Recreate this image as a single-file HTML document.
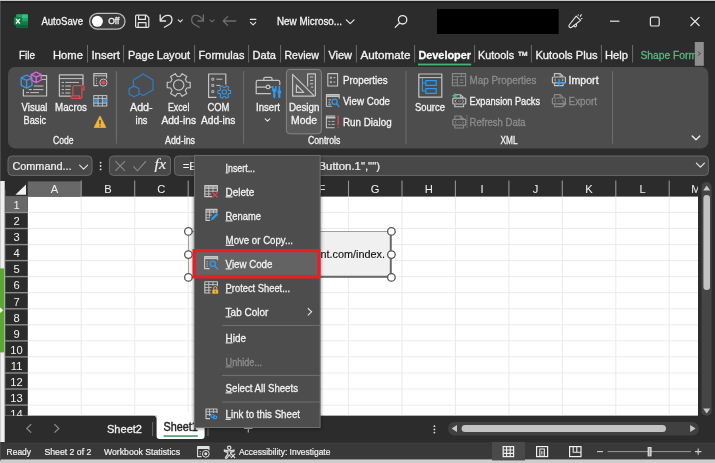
<!DOCTYPE html>
<html lang="en"><head><meta charset="utf-8"><title>Excel - View Code</title>
<style>
html,body{margin:0;padding:0;background:#2c2c2c;overflow:hidden}
svg{display:block;font-family:"Liberation Sans",sans-serif;will-change:transform}
text{white-space:pre}
</style></head>
<body>
<svg width="715" height="463" viewBox="0 0 715 463">
<rect x="0" y="0" width="715" height="463" fill="#2c2c2c" />
<g>
<rect x="16.4" y="14.4" width="11.4" height="13.5" rx="1.2" fill="#21a366"/>
<rect x="16.4" y="14.4" width="5.8" height="3.6" fill="#21a366"/>
<rect x="22.2" y="14.4" width="5.6" height="3.6" fill="#33c481"/>
<rect x="16.4" y="18" width="5.8" height="3.3" fill="#107c41"/>
<rect x="22.2" y="18" width="5.6" height="3.3" fill="#21a366"/>
<rect x="16.4" y="21.3" width="5.8" height="3.3" fill="#185c37"/>
<rect x="22.2" y="21.3" width="5.6" height="3.3" fill="#107c41"/>
<rect x="16.4" y="24.6" width="11.4" height="3.3" fill="#185c37"/>
<rect x="13.9" y="17" width="8" height="8.2" rx="1" fill="#107c41"/>
<path d="M16 18.800 L19.800 23.500 M19.800 18.800 L16 23.500" stroke="#fff" stroke-width="1.300" fill="none"/>
</g>
<text x="41.4" y="25.4" font-size="10.2" fill="#f3f3f3" stroke="#f3f3f3" stroke-width="0.3" textLength="41.6" lengthAdjust="spacingAndGlyphs" >AutoSave</text>
<rect x="89.6" y="13.4" width="35.4" height="15.8" fill="#3a3a3a" rx="7.9" stroke="#bdbdbd" stroke-width="1.3" />
<circle cx="97.4" cy="21.3" r="5.5" fill="#fff"/>
<text x="108.2" y="24.3" font-size="8.6" fill="#f3f3f3" stroke="#f3f3f3" stroke-width="0.3" textLength="11.2" lengthAdjust="spacingAndGlyphs" >Off</text>
<g stroke="#e6e6e6" stroke-width="1.2" fill="none" stroke-linejoin="round"><path d="M136.800 15.200 h9.400 l2.600 2.400 v8.600 q0 1.200 -1.200 1.200 h-10.800 q-1.200 0 -1.200 -1.200 v-9.800 q0 -1.200 1.200 -1.200 z"/><path d="M138.600 15.400 v4 h6.800 v-4"/><path d="M138.200 27.200 v-4.600 h7.800 v4.600"/></g>
<g stroke="#e6e6e6" stroke-width="1.3" fill="none" stroke-linecap="round" stroke-linejoin="round"><path d="M160.200 14.800 V21 H165.600"/><path d="M160.600 20.600 C162 17.600 165 15.400 168 15.400 C170.600 15.400 172 17.600 172 20 C172 22 171 23.200 169.600 24.300 L164.400 27.200"/><path d="M178.200 19.800 l2.100 2.100 l2.100 -2.100" stroke-width="1.100"/></g>
<g stroke="#6e6e6e" stroke-width="1.3" fill="none" stroke-linecap="round" stroke-linejoin="round"><path d="M203.400 14.800 V21 H198"/><path d="M203 20.600 C201.600 17.600 198.600 15.400 195.600 15.400 C193 15.400 191.600 17.600 191.600 20 C191.600 22 192.600 23.200 194 24.300 L199.200 27.200"/><path d="M210 19.800 l2.100 2.100 l2.100 -2.100" stroke-width="1.100"/><path d="M235.800 21 h-12.600 m4.400 -4.400 l-4.400 4.400 l4.400 4.400"/></g>
<g stroke="#e6e6e6" stroke-width="1.1" fill="none" stroke-linecap="round" stroke-linejoin="round"><path d="M250.300 19.400 h5.600"/><path d="M250.500 22.300 l2.600 2.500 l2.600 -2.500"/></g>
<text x="277" y="25.4" font-size="10.2" fill="#f3f3f3" stroke="#f3f3f3" stroke-width="0.3" textLength="65" lengthAdjust="spacingAndGlyphs" >New Microso...</text>
<path d="M346.300 19.800 l3.900 3.900 l3.900 -3.900" stroke="#e6e6e6" stroke-width="1.2" fill="none" stroke-linecap="round" stroke-linejoin="round"/>
<g stroke="#e6e6e6" stroke-width="1.3" fill="none" stroke-linecap="round"><circle cx="402.6" cy="19.8" r="4.2"/><path d="M399.6 23 L395.2 27.4"/></g>
<rect x="437" y="9" width="121.6" height="25" fill="#000" />
<g stroke="#e6e6e6" stroke-width="1.1" fill="none" stroke-linecap="round" stroke-linejoin="round"><path d="M569.200 25 L576.200 16.200 L580.600 20.400 L571.600 27.300 Q569.800 28.300 569 26.600 Q568.700 25.700 569.200 25 Z"/><path d="M573.800 25.800 q0.800 1.600 2.200 0.800 q1 -0.800 0.400 -2.400"/><path d="M580.300 16.400 l1 -1.700 M578.200 15.300 l0.100 -0.500 M581.300 18.700 l0.700 -0.200"/></g>
<line x1="610" y1="21.2" x2="619.4" y2="21.2" stroke="#e6e6e6" stroke-width="1.2" />
<rect x="650.4" y="17.2" width="8.8" height="8.8" fill="none" rx="1.6" stroke="#e6e6e6" stroke-width="1.2" />
<path d="M690.900 17.300 l8.200 8.200 M699.100 17.300 l-8.200 8.200" stroke="#e6e6e6" stroke-width="1.200" fill="none" stroke-linecap="round"/>
<text x="19" y="58.7" font-size="10.7" fill="#f3f3f3" stroke="#f3f3f3" stroke-width="0.3" textLength="16" lengthAdjust="spacingAndGlyphs" >File</text>
<text x="53" y="58.7" font-size="10.7" fill="#f3f3f3" stroke="#f3f3f3" stroke-width="0.3" textLength="30" lengthAdjust="spacingAndGlyphs" >Home</text>
<text x="91.4" y="58.7" font-size="10.7" fill="#f3f3f3" stroke="#f3f3f3" stroke-width="0.3" textLength="28.6" lengthAdjust="spacingAndGlyphs" >Insert</text>
<text x="128" y="58.7" font-size="10.7" fill="#f3f3f3" stroke="#f3f3f3" stroke-width="0.3" textLength="62" lengthAdjust="spacingAndGlyphs" >Page Layout</text>
<text x="198.6" y="58.7" font-size="10.7" fill="#f3f3f3" stroke="#f3f3f3" stroke-width="0.3" textLength="45.8" lengthAdjust="spacingAndGlyphs" >Formulas</text>
<text x="252.6" y="58.7" font-size="10.7" fill="#f3f3f3" stroke="#f3f3f3" stroke-width="0.3" textLength="23.4" lengthAdjust="spacingAndGlyphs" >Data</text>
<text x="284.4" y="58.7" font-size="10.7" fill="#f3f3f3" stroke="#f3f3f3" stroke-width="0.3" textLength="34.6" lengthAdjust="spacingAndGlyphs" >Review</text>
<text x="328.4" y="58.7" font-size="10.7" fill="#f3f3f3" stroke="#f3f3f3" stroke-width="0.3" textLength="23.6" lengthAdjust="spacingAndGlyphs" >View</text>
<text x="360.4" y="58.7" font-size="10.7" fill="#f3f3f3" stroke="#f3f3f3" stroke-width="0.3" textLength="50.0" lengthAdjust="spacingAndGlyphs" >Automate</text>
<text x="418.4" y="58.7" font-size="10.7" fill="#fff" stroke="#fff" stroke-width="0.3" textLength="52.6" lengthAdjust="spacingAndGlyphs" font-weight="bold" >Developer</text>
<rect x="418" y="63.6" width="53.2" height="1.8" fill="#41b675" />
<text x="478" y="58.7" font-size="10.7" fill="#f3f3f3" stroke="#f3f3f3" stroke-width="0.3" textLength="50" lengthAdjust="spacingAndGlyphs" >Kutools ™</text>
<text x="535.4" y="58.7" font-size="10.7" fill="#f3f3f3" stroke="#f3f3f3" stroke-width="0.3" textLength="62.2" lengthAdjust="spacingAndGlyphs" >Kutools Plus</text>
<text x="605" y="58.7" font-size="10.7" fill="#f3f3f3" stroke="#f3f3f3" stroke-width="0.3" textLength="23" lengthAdjust="spacingAndGlyphs" >Help</text>
<text x="640.4" y="58.7" font-size="10.7" fill="#55bb80" stroke="#55bb80" stroke-width="0.3" textLength="65.2" lengthAdjust="spacingAndGlyphs" >Shape Format</text>
<line x1="87.5" y1="45" x2="87.5" y2="62.5" stroke="#6e6e6e" stroke-width="1" />
<line x1="123.6" y1="45" x2="123.6" y2="62.5" stroke="#6e6e6e" stroke-width="1" />
<line x1="194.6" y1="45" x2="194.6" y2="62.5" stroke="#6e6e6e" stroke-width="1" />
<line x1="248.6" y1="45" x2="248.6" y2="62.5" stroke="#6e6e6e" stroke-width="1" />
<line x1="280.6" y1="45" x2="280.6" y2="62.5" stroke="#6e6e6e" stroke-width="1" />
<line x1="324.4" y1="45" x2="324.4" y2="62.5" stroke="#6e6e6e" stroke-width="1" />
<line x1="356.4" y1="45" x2="356.4" y2="62.5" stroke="#6e6e6e" stroke-width="1" />
<line x1="414.6" y1="45" x2="414.6" y2="62.5" stroke="#6e6e6e" stroke-width="1" />
<line x1="474.6" y1="45" x2="474.6" y2="62.5" stroke="#6e6e6e" stroke-width="1" />
<line x1="531.4" y1="45" x2="531.4" y2="62.5" stroke="#6e6e6e" stroke-width="1" />
<line x1="601.4" y1="45" x2="601.4" y2="62.5" stroke="#6e6e6e" stroke-width="1" />
<line x1="632.6" y1="45" x2="632.6" y2="62.5" stroke="#6e6e6e" stroke-width="1" />
<rect x="694.8" y="40" width="21" height="27" fill="#2c2c2c" />
<rect x="694.8" y="42" width="9" height="23.8" fill="#8e8e8e" />
<path d="M698.2 51.6 l2 2 l-2 2" stroke="#333" stroke-width="0.9" fill="none"/>
<rect x="0" y="0" width="715" height="1.2" fill="#c6c6c6" />
<rect x="0" y="1.2" width="715" height="1.4" fill="#1b1b1b" />
<rect x="8" y="67" width="700.4" height="81.4" fill="#4d4d4d" rx="7" />
<line x1="116.4" y1="71" x2="116.4" y2="143.6" stroke="#6f6f6f" stroke-width="1" />
<line x1="243.6" y1="71" x2="243.6" y2="143.6" stroke="#6f6f6f" stroke-width="1" />
<line x1="406" y1="71" x2="406" y2="143.6" stroke="#6f6f6f" stroke-width="1" />
<line x1="612.6" y1="71" x2="612.6" y2="143.6" stroke="#6f6f6f" stroke-width="1" />
<g fill="none" stroke-linejoin="round" stroke-linecap="round"><path d="M41 75.6 h5.6 v20.4 h-23.2 v-6.4" stroke="#c4c4c4" stroke-width="1.2"/><path d="M42 79.4 h4.4" stroke="#c4c4c4" stroke-width="1"/><path d="M34.4 86 h8.6 M29 89.6 h2.4 M33.6 89.6 h9.4 M26.6 92.6 h2 M30.6 92.6 h8" stroke="#c4c4c4" stroke-width="1"/><path d="M21.200 77.800 l5.400 -2.600 l5.400 2.600 v7.600 l-5.400 2.800 l-5.400 -2.800 z M26.600 80.400 v7.600 M21.200 77.800 l5.400 2.600 l5.400 -2.600" stroke="#3a96dd" stroke-width="1.400"/><path d="M31.200 74.600 l5 -2.500 l5 2.500 v5.400 l-5 2.600 l-5 -2.600 z M36.200 77 v5.400 M31.200 74.600 l5 2.400 l5 -2.400" stroke="#d067d6" stroke-width="1.400"/></g>
<text x="21.6" y="111" font-size="10" fill="#f3f3f3" stroke="#f3f3f3" stroke-width="0.3" textLength="25.8" lengthAdjust="spacingAndGlyphs" >Visual</text>
<text x="23.6" y="124" font-size="10" fill="#f3f3f3" stroke="#f3f3f3" stroke-width="0.3" textLength="22.4" lengthAdjust="spacingAndGlyphs" >Basic</text>
<g fill="none" stroke-linejoin="round" stroke-linecap="round"><path d="M70.4 96.2 h-11 v-21.4 h23.6 v10" stroke="#c4c4c4" stroke-width="1.2"/><path d="M59.4 78.6 h23.6" stroke="#c4c4c4" stroke-width="1"/><path d="M62 82.4 h1.6 M65.6 82.4 h13 M62 86 h1.6 M65.6 86 h5 M62 89.6 h1.6 M65.6 89.6 h4.4 M62 93 h1.6 M65.6 93 h4.4" stroke="#c4c4c4" stroke-width="1"/><path d="M72.800 95.800 V87.400 Q72.800 85.600 74.600 85.600 H82.200 Q84.200 85.600 84.200 87.600 V89.600 H81.900 M81.900 87.400 V96.400 Q81.900 98.300 80 98.300 H72.200 Q70.900 98.300 70.900 97.100 Q70.900 95.900 72.200 95.900 H79.400 Q80 97 79.700 98.200" stroke="#e4484d" stroke-width="1.200"/></g>
<text x="55" y="111" font-size="10" fill="#f3f3f3" stroke="#f3f3f3" stroke-width="0.3" textLength="32" lengthAdjust="spacingAndGlyphs" >Macros</text>
<g fill="none" stroke-linejoin="round"><path d="M98.4 85.6 h-4.6 v-12 h12.800 v5" stroke="#c4c4c4" stroke-width="1.1"/><path d="M93.8 75.800 h12.800" stroke="#c4c4c4" stroke-width="1"/><path d="M96 78.600 h1 M96 81 h1 M96 83.400 h1" stroke="#c4c4c4" stroke-width="1"/><circle cx="103.4" cy="82.6" r="3.6" stroke="#c4c4c4" stroke-width="1"/><circle cx="103.4" cy="82.6" r="2.1" fill="#e4484d"/></g>
<g><rect x="93.8" y="95.6" width="13" height="10.4" fill="none" stroke="#c4c4c4" stroke-width="1"/><rect x="94.300" y="98.6" width="3.6" height="4.4" fill="#2f8ee0"/><rect x="102.6" y="98.6" width="3.8" height="4.4" fill="#2f8ee0"/><path d="M93.800 98.400 h13 M93.800 103.200 h13 M98.200 95.600 v10.400 M102.400 95.600 v10.400" stroke="#c4c4c4" stroke-width="0.9" fill="none"/><path d="M98.4 100.800 h4" stroke="#2f8ee0" stroke-width="1" stroke-dasharray="1 1"/></g>
<path d="M100 116 l5.800 11.400 h-11.600 z" fill="#f4b43c" stroke="#f4b43c" stroke-width="0.8" stroke-linejoin="round"/><path d="M100 120 v4.200 M100 125.400 v1" stroke="#3a3a3a" stroke-width="1.2"/>
<text x="53" y="144.2" font-size="10" fill="#f3f3f3" stroke="#f3f3f3" stroke-width="0.3" textLength="20.4" lengthAdjust="spacingAndGlyphs" >Code</text>
<g fill="none" stroke="#2d7fd0" stroke-width="1.2" stroke-linejoin="round"><path d="M133.4 86 V80 L143.2 74.1 L153 80 V90 L143.2 95.6 L139.6 93.6"/><path d="M134 86.1 L139 88.6 V94.2 L134 96.8 L129.2 94.2 V88.6 Z"/></g>
<text x="130" y="111" font-size="10" fill="#f3f3f3" stroke="#f3f3f3" stroke-width="0.3" textLength="22.6" lengthAdjust="spacingAndGlyphs" >Add-</text>
<text x="135.6" y="124" font-size="10" fill="#f3f3f3" stroke="#f3f3f3" stroke-width="0.3" textLength="11.8" lengthAdjust="spacingAndGlyphs" >ins</text>
<path d="M186.76 82.00 L190.19 82.31 L190.19 87.69 L186.76 88.00 L185.33 90.48 L186.78 93.60 L182.11 96.30 L180.13 93.48 L177.27 93.48 L175.29 96.30 L170.62 93.60 L172.07 90.48 L170.64 88.00 L167.21 87.69 L167.21 82.31 L170.64 82.00 L172.07 79.52 L170.62 76.40 L175.29 73.70 L177.27 76.52 L180.13 76.52 L182.11 73.70 L186.78 76.40 L185.33 79.52 Z" fill="none" stroke="#c4c4c4" stroke-width="1.2" stroke-linejoin="round"/>
<circle cx="178.7" cy="85" r="5.2" fill="none" stroke="#c4c4c4" stroke-width="1.2"/>
<text x="168" y="111" font-size="10" fill="#f3f3f3" stroke="#f3f3f3" stroke-width="0.3" textLength="21.4" lengthAdjust="spacingAndGlyphs" >Excel</text>
<text x="161.4" y="124" font-size="10" fill="#f3f3f3" stroke="#f3f3f3" stroke-width="0.3" textLength="34.6" lengthAdjust="spacingAndGlyphs" >Add-ins</text>
<g fill="none" stroke="#c4c4c4" stroke-linejoin="round"><path d="M216.4 97.4 h-7.800 v-23.400 h17.200 v10.600" stroke-width="1.2"/><path d="M211.800 78.200 h2 v2 h-2 z M211.800 84.400 h2 v2 h-2 z M211.800 90.600 h2 v2 h-2 z" stroke-width="0.9"/><path d="M216.400 79.200 h6 M216.400 85.400 h4" stroke-width="1"/></g>
<path d="M228.61 90.40 L230.63 90.52 L230.63 93.48 L228.61 93.60 L227.84 94.93 L228.75 96.74 L226.18 98.22 L225.07 96.54 L223.53 96.54 L222.42 98.22 L219.85 96.74 L220.76 94.93 L219.99 93.60 L217.97 93.48 L217.97 90.52 L219.99 90.40 L220.76 89.07 L219.85 87.26 L222.42 85.78 L223.53 87.46 L225.07 87.46 L226.18 85.78 L228.75 87.26 L227.84 89.07 Z" fill="none" stroke="#3a96dd" stroke-width="1.1" stroke-linejoin="round"/>
<circle cx="224.3" cy="92" r="2.2" fill="none" stroke="#3a96dd" stroke-width="1.1"/>
<text x="207.4" y="111" font-size="10" fill="#f3f3f3" stroke="#f3f3f3" stroke-width="0.3" textLength="22" lengthAdjust="spacingAndGlyphs" >COM</text>
<text x="201" y="124" font-size="10" fill="#f3f3f3" stroke="#f3f3f3" stroke-width="0.3" textLength="34.4" lengthAdjust="spacingAndGlyphs" >Add-ins</text>
<text x="165" y="144.2" font-size="10" fill="#f3f3f3" stroke="#f3f3f3" stroke-width="0.3" textLength="30" lengthAdjust="spacingAndGlyphs" >Add-ins</text>
<g fill="none" stroke="#c4c4c4" stroke-width="1.2" stroke-linejoin="round" stroke-linecap="round"><path d="M270.400 93.600 h-14.200 v-11.600 q0 -1.600 1.600 -1.600 h20.400 q1.600 0 1.600 1.600 v2.600"/><path d="M263.800 80.200 v-1.600 q0 -1.200 1.200 -1.200 h5.800 q1.200 0 1.200 1.200 v1.600"/><path d="M256.400 87.200 h9.600 M270 87.200 h1"/><circle cx="268" cy="86.900" r="1.800"/></g>
<g fill="#2f9bf0" stroke="none"><path d="M272.100 86 h1.500 v2.800 h1.500 v-2.800 h1.500 v4.200 q0 1.100 -1.200 1.500 v5.400 q0 1.100 -1.100 1.100 t-1.100 -1.100 v-5.400 q-1.100 -0.400 -1.100 -1.500 z"/><path d="M278.400 86 h1.800 v4.400 h0.900 v2.800 h-0.700 v3.900 q0 1.100 -1.100 1.100 t-1.100 -1.100 v-3.900 h-0.700 v-2.800 h0.900 z"/></g>
<text x="256" y="111" font-size="10" fill="#f3f3f3" stroke="#f3f3f3" stroke-width="0.3" textLength="24" lengthAdjust="spacingAndGlyphs" >Insert</text>
<path d="M265.200 118.800 l2.300 2.300 l2.300 -2.300" stroke="#e6e6e6" stroke-width="1.1" fill="none" stroke-linecap="round" stroke-linejoin="round"/>
<rect x="286.4" y="69.4" width="35" height="64.4" fill="#5a5a5a" rx="3.5" stroke="#868686" stroke-width="1" />
<g fill="none" stroke="#c4c4c4" stroke-width="1.2" stroke-linejoin="round"><path d="M292.600 74.400 v21.800 h21.800 z"/><path d="M296.400 85 v7.400 h7.400 z"/><path d="M307.600 86.400 v-12.600 h7.800 v22.400" /><path d="M310 77 h3.200 M310 80.400 h3.200 M310 83.800 h3.200 M311 87.200 h2.200 M313 90.600 h0.800" stroke-width="1"/></g>
<text x="289" y="111" font-size="10" fill="#f3f3f3" stroke="#f3f3f3" stroke-width="0.3" textLength="30.4" lengthAdjust="spacingAndGlyphs" >Design</text>
<text x="291" y="124" font-size="10" fill="#f3f3f3" stroke="#f3f3f3" stroke-width="0.3" textLength="26" lengthAdjust="spacingAndGlyphs" >Mode</text>
<g fill="none" stroke="#c4c4c4" stroke-linejoin="round"><rect x="327.800" y="73.600" width="9.800" height="12.400" stroke-width="1.1"/><path d="M330.200 77 h1.400 v1.400 h-1.400 z M330.200 81.400 h1.400 v1.400 h-1.400 z" stroke-width="0.8"/><path d="M333.400 77.700 h2 M333.400 82.100 h2" stroke-width="1"/></g>
<text x="343" y="83.6" font-size="10" fill="#f3f3f3" stroke="#f3f3f3" stroke-width="0.3" textLength="44.6" lengthAdjust="spacingAndGlyphs" >Properties</text>
<g fill="none" stroke="#c4c4c4" stroke-linejoin="round"><path d="M331.800 106.200 h-5.400 v-11.600 h12.800 v4.200" stroke-width="1.100"/><path d="M326.400 96.200 h12.800" stroke-width="1.800"/><path d="M328.400 99.800 h2.600 M328.400 102.200 h1.800 M328.400 104.200 h2.600" stroke-width="0.900"/></g><circle cx="334.600" cy="101.800" r="2.600" fill="none" stroke="#2f9bf0" stroke-width="1.200"/><path d="M336.500 103.800 l2.500 2.700" stroke="#2f9bf0" stroke-width="1.300" stroke-linecap="round"/>
<text x="343" y="105" font-size="10" fill="#f3f3f3" stroke="#f3f3f3" stroke-width="0.3" textLength="47" lengthAdjust="spacingAndGlyphs" >View Code</text>
<g fill="none" stroke="#c4c4c4" stroke-linejoin="round"><path d="M334.600 127.800 h-8.200 v-11.800 h8.800" stroke-width="1.100"/><path d="M326.400 117.600 h9" stroke-width="1.800"/><path d="M328.400 121.400 h2 M331.600 121.400 h3 M328.400 124.400 h2 M331.600 124.400 h3" stroke-width="0.900"/></g><path d="M338.200 115.600 v9.400 M338.200 126.600 v1.600" stroke="#e4484d" stroke-width="1.300"/>
<text x="343" y="126.4" font-size="10" fill="#f3f3f3" stroke="#f3f3f3" stroke-width="0.3" textLength="48.6" lengthAdjust="spacingAndGlyphs" >Run Dialog</text>
<text x="308" y="144.2" font-size="10" fill="#f3f3f3" stroke="#f3f3f3" stroke-width="0.3" textLength="32.4" lengthAdjust="spacingAndGlyphs" >Controls</text>
<g fill="none" stroke-linejoin="round"><rect x="418.800" y="74" width="23" height="23.200" stroke="#c4c4c4" stroke-width="1.200"/><path d="M418.800 77.600 h23" stroke="#c4c4c4" stroke-width="1"/><rect x="425.800" y="80.600" width="10.400" height="4.800" stroke="#2f9bf0" stroke-width="1.100"/><rect x="425.800" y="88.600" width="10.400" height="4.800" stroke="#2f9bf0" stroke-width="1.100"/><path d="M422.400 78 v13 h3.400 M422.400 83 h3.400" stroke="#2f9bf0" stroke-width="1.100"/></g>
<text x="415" y="111" font-size="10" fill="#f3f3f3" stroke="#f3f3f3" stroke-width="0.3" textLength="30" lengthAdjust="spacingAndGlyphs" >Source</text>
<g fill="none" stroke="#8a8a8a" stroke-linejoin="round"><rect x="452.400" y="73.600" width="13.200" height="12.200" stroke-width="1.100"/><path d="M452.400 76.600 h13.200 M452.400 79.800 h5 M452.400 82.800 h5 M457.400 76.600 v9.200 M461.400 73.600 v3" stroke-width="0.900"/><path d="M459.800 80 h3.600 M459.800 82.600 h3.600" stroke-width="0.900"/></g>
<text x="469.6" y="83.6" font-size="10" fill="#8c8c8c" stroke="#8c8c8c" stroke-width="0.3" textLength="66.8" lengthAdjust="spacingAndGlyphs" >Map Properties</text>
<g fill="none" stroke="#c4c4c4" stroke-linejoin="round" transform="translate(452.4 94.4)"><path d="M2.400 3.400 v-3 h5.800 l2.600 2.400 v0.600" stroke-width="1.100"/><path d="M8 0.600 v2.400 h2.600" stroke-width="0.9"/><rect x="0.400" y="3.800" width="13" height="5.800" rx="0.900" stroke-width="1.200"/><path d="M4 5.300 l-1.500 1.400 l1.500 1.400 M9.800 5.300 l1.500 1.400 l-1.500 1.400 M6 6.700 h0.800 M7.400 6.700 h0.800" stroke-width="0.9"/><path d="M2.400 10 v2.400 h8.800 v-2.400" stroke-width="1.100"/></g>
<path d="M454.600 93.600 v4.400 M452.400 95.800 h4.400" stroke="#35c46a" stroke-width="1.500"/>
<text x="469.6" y="105" font-size="10" fill="#f3f3f3" stroke="#f3f3f3" stroke-width="0.3" textLength="70.4" lengthAdjust="spacingAndGlyphs" >Expansion Packs</text>
<g fill="none" stroke="#8a8a8a" stroke-linejoin="round" transform="translate(452.4 115.6)"><path d="M2.400 3.400 v-3 h5.800 l2.600 2.400 v0.600" stroke-width="1.100"/><path d="M8 0.600 v2.400 h2.600" stroke-width="0.9"/><rect x="0.400" y="3.800" width="13" height="5.800" rx="0.900" stroke-width="1.200"/><path d="M4 5.300 l-1.500 1.400 l1.500 1.400 M9.800 5.300 l1.500 1.400 l-1.500 1.400 M6 6.700 h0.800 M7.400 6.700 h0.800" stroke-width="0.9"/><path d="M2.400 10 v2.400 h8.800 v-2.400" stroke-width="1.100"/></g>
<path d="M467 115.400 v13" stroke="#8a8a8a" stroke-width="1" stroke-dasharray="1.2 1"/>
<text x="469.6" y="126.4" font-size="10" fill="#8c8c8c" stroke="#8c8c8c" stroke-width="0.3" textLength="56" lengthAdjust="spacingAndGlyphs" >Refresh Data</text>
<text x="500.6" y="144.2" font-size="10" fill="#f3f3f3" stroke="#f3f3f3" stroke-width="0.3" textLength="17" lengthAdjust="spacingAndGlyphs" >XML</text>
<g fill="none" stroke="#c4c4c4" stroke-linejoin="round" transform="translate(552 73.2)"><path d="M2.400 3.400 v-3 h5.800 l2.600 2.400 v0.600" stroke-width="1.100"/><path d="M8 0.600 v2.400 h2.600" stroke-width="0.9"/><rect x="0.400" y="3.800" width="13" height="5.800" rx="0.900" stroke-width="1.200"/><path d="M4 5.300 l-1.500 1.400 l1.500 1.400 M9.800 5.300 l1.500 1.400 l-1.500 1.400 M6 6.700 h0.800 M7.400 6.700 h0.800" stroke-width="0.9"/><path d="M2.400 10 v2.400 h8.800 v-2.400" stroke-width="1.100"/></g>
<path d="M565.600 83 h-8.200 m2.600 -2.600 l-2.600 2.600 l2.600 2.600" stroke="#2f9bf0" stroke-width="1.300" fill="none"/>
<text x="568.6" y="83.6" font-size="10" fill="#f3f3f3" stroke="#f3f3f3" stroke-width="0.3" textLength="30" lengthAdjust="spacingAndGlyphs" >Import</text>
<g fill="none" stroke="#8a8a8a" stroke-linejoin="round" transform="translate(552 94.2)"><path d="M2.400 3.400 v-3 h5.800 l2.600 2.400 v0.600" stroke-width="1.100"/><path d="M8 0.600 v2.400 h2.600" stroke-width="0.9"/><rect x="0.400" y="3.800" width="13" height="5.800" rx="0.900" stroke-width="1.200"/><path d="M4 5.300 l-1.500 1.400 l1.500 1.400 M9.800 5.300 l1.500 1.400 l-1.500 1.400 M6 6.700 h0.800 M7.400 6.700 h0.800" stroke-width="0.9"/><path d="M2.400 10 v2.400 h8.800 v-2.400" stroke-width="1.100"/></g>
<path d="M559.200 103.800 h6.600 m-2.400 -2.400 l2.400 2.400 l-2.400 2.400" stroke="#8a8a8a" stroke-width="1.100" fill="none"/>
<text x="568.6" y="105" font-size="10" fill="#8c8c8c" stroke="#8c8c8c" stroke-width="0.3" textLength="28.4" lengthAdjust="spacingAndGlyphs" >Export</text>
<path d="M692.200 136 l3.800 3.800 l3.800 -3.800" stroke="#f0f0f0" stroke-width="1.300" fill="none" stroke-linecap="round" stroke-linejoin="round"/>
<rect x="8" y="156" width="84" height="19.4" fill="#484848" rx="4" stroke="#6a6a6a" stroke-width="1" />
<text x="12.4" y="169.6" font-size="10.4" fill="#f3f3f3" stroke="#f3f3f3" stroke-width="0.2" textLength="59.2" lengthAdjust="spacingAndGlyphs" >Command...</text>
<path d="M79.600 165.200 l4 4 l4 -4" stroke="#e6e6e6" stroke-width="1.100" fill="none" stroke-linecap="round" stroke-linejoin="round"/>
<circle cx="100.600" cy="162.6" r="0.9" fill="#e6e6e6"/>
<circle cx="100.600" cy="166" r="0.9" fill="#e6e6e6"/>
<circle cx="100.600" cy="169.4" r="0.9" fill="#e6e6e6"/>
<rect x="109.4" y="156" width="61.2" height="19.4" fill="#484848" rx="4" stroke="#6a6a6a" stroke-width="1" />
<path d="M115.400 161.200 l9.600 9.600 M125 161.200 l-9.600 9.600" stroke="#8a8a8a" stroke-width="1.100" fill="none"/>
<path d="M133.400 166.400 l4 4.400 l8.600 -9.600" stroke="#8a8a8a" stroke-width="1.100" fill="none"/>
<text x="154.6" y="169.2" font-size="14" fill="#f0f0f0" stroke="#f0f0f0" stroke-width="0.15" textLength="11.6" lengthAdjust="spacingAndGlyphs" font-style="italic" font-family="Liberation Serif, serif" >fx</text>
<rect x="174.4" y="156" width="534" height="19.4" fill="#484848" rx="4" stroke="#6a6a6a" stroke-width="1" />
<text font-size="10.4" fill="#f3f3f3" stroke="#f3f3f3" stroke-width="0.2"><tspan x="183" y="169.6" textLength="135" lengthAdjust="spacingAndGlyphs">=EMBED(&quot;Forms.Command</tspan><tspan x="318.5" y="169.6" textLength="61.5" lengthAdjust="spacingAndGlyphs">Button.1&quot;,&quot;&quot;)</tspan></text>
<path d="M696.400 163.200 l4 4 l4 -4" stroke="#e6e6e6" stroke-width="1.200" fill="none" stroke-linecap="round" stroke-linejoin="round"/>
<rect x="5.2" y="190" width="692.8" height="225.8" fill="#ffffff" />
<rect x="0" y="181" width="4.7" height="261" fill="#efefef" />
<rect x="0" y="181" width="1" height="261" fill="#cdcdcd" />
<rect x="0" y="268.4" width="4.1" height="84" fill="#5aa832" />
<path d="M0 307.400 l3.200 2.800 l-3.200 2.800 z" fill="#fff"/>
<rect x="5.2" y="181.4" width="692.8" height="15.2" fill="#2c2c2c" />
<rect x="27.8" y="181.4" width="53.45" height="15.2" fill="#686868" />
<path d="M26 184.400 v10.400 h-10.600 z" fill="#f0f0f0"/>
<text x="54.5" y="193.4" font-size="11.2" fill="#f3f3f3" text-anchor="middle" >A</text>
<text x="108.0" y="193.4" font-size="11.2" fill="#f3f3f3" text-anchor="middle" >B</text>
<line x1="81.2" y1="180.6" x2="81.2" y2="196.6" stroke="#939393" stroke-width="1.1" />
<text x="161.4" y="193.4" font-size="11.2" fill="#f3f3f3" text-anchor="middle" >C</text>
<line x1="134.7" y1="180.6" x2="134.7" y2="196.6" stroke="#939393" stroke-width="1.1" />
<text x="214.9" y="193.4" font-size="11.2" fill="#f3f3f3" text-anchor="middle" >D</text>
<line x1="188.2" y1="180.6" x2="188.2" y2="196.6" stroke="#939393" stroke-width="1.1" />
<text x="268.3" y="193.4" font-size="11.2" fill="#f3f3f3" text-anchor="middle" >E</text>
<line x1="241.6" y1="180.6" x2="241.6" y2="196.6" stroke="#939393" stroke-width="1.1" />
<text x="321.8" y="193.4" font-size="11.2" fill="#f3f3f3" text-anchor="middle" >F</text>
<line x1="295.1" y1="180.6" x2="295.1" y2="196.6" stroke="#939393" stroke-width="1.1" />
<text x="375.2" y="193.4" font-size="11.2" fill="#f3f3f3" text-anchor="middle" >G</text>
<line x1="348.5" y1="180.6" x2="348.5" y2="196.6" stroke="#939393" stroke-width="1.1" />
<text x="428.7" y="193.4" font-size="11.2" fill="#f3f3f3" text-anchor="middle" >H</text>
<line x1="402.0" y1="180.6" x2="402.0" y2="196.6" stroke="#939393" stroke-width="1.1" />
<text x="482.1" y="193.4" font-size="11.2" fill="#f3f3f3" text-anchor="middle" >I</text>
<line x1="455.4" y1="180.6" x2="455.4" y2="196.6" stroke="#939393" stroke-width="1.1" />
<text x="535.6" y="193.4" font-size="11.2" fill="#f3f3f3" text-anchor="middle" >J</text>
<line x1="508.9" y1="180.6" x2="508.9" y2="196.6" stroke="#939393" stroke-width="1.1" />
<text x="589.0" y="193.4" font-size="11.2" fill="#f3f3f3" text-anchor="middle" >K</text>
<line x1="562.3" y1="180.6" x2="562.3" y2="196.6" stroke="#939393" stroke-width="1.1" />
<text x="642.5" y="193.4" font-size="11.2" fill="#f3f3f3" text-anchor="middle" >L</text>
<line x1="615.8" y1="180.6" x2="615.8" y2="196.6" stroke="#939393" stroke-width="1.1" />
<text x="695.9" y="193.4" font-size="11.2" fill="#f3f3f3" text-anchor="middle" >M</text>
<line x1="669.2" y1="180.6" x2="669.2" y2="196.6" stroke="#939393" stroke-width="1.1" />
<rect x="5.2" y="196.6" width="22.6" height="219" fill="#2c2c2c" />
<rect x="5.2" y="196.6" width="22.6" height="16" fill="#686868" />
<text x="16.6" y="209.2" font-size="11.2" fill="#f3f3f3" text-anchor="middle" >1</text>
<text x="16.6" y="225.3" font-size="11.2" fill="#f3f3f3" text-anchor="middle" >2</text>
<line x1="5.2" y1="212.5" x2="27.8" y2="212.5" stroke="#8c8c8c" stroke-width="1.4" />
<text x="16.6" y="241.3" font-size="11.2" fill="#f3f3f3" text-anchor="middle" >3</text>
<line x1="5.2" y1="228.5" x2="27.8" y2="228.5" stroke="#8c8c8c" stroke-width="1.4" />
<text x="16.6" y="257.4" font-size="11.2" fill="#f3f3f3" text-anchor="middle" >4</text>
<line x1="5.2" y1="244.6" x2="27.8" y2="244.6" stroke="#8c8c8c" stroke-width="1.4" />
<text x="16.6" y="273.4" font-size="11.2" fill="#f3f3f3" text-anchor="middle" >5</text>
<line x1="5.2" y1="260.6" x2="27.8" y2="260.6" stroke="#8c8c8c" stroke-width="1.4" />
<text x="16.6" y="289.4" font-size="11.2" fill="#f3f3f3" text-anchor="middle" >6</text>
<line x1="5.2" y1="276.6" x2="27.8" y2="276.6" stroke="#8c8c8c" stroke-width="1.4" />
<text x="16.6" y="305.5" font-size="11.2" fill="#f3f3f3" text-anchor="middle" >7</text>
<line x1="5.2" y1="292.7" x2="27.8" y2="292.7" stroke="#8c8c8c" stroke-width="1.4" />
<text x="16.6" y="321.6" font-size="11.2" fill="#f3f3f3" text-anchor="middle" >8</text>
<line x1="5.2" y1="308.8" x2="27.8" y2="308.8" stroke="#8c8c8c" stroke-width="1.4" />
<text x="16.6" y="337.6" font-size="11.2" fill="#f3f3f3" text-anchor="middle" >9</text>
<line x1="5.2" y1="324.8" x2="27.8" y2="324.8" stroke="#8c8c8c" stroke-width="1.4" />
<text x="16.6" y="353.7" font-size="11.2" fill="#f3f3f3" text-anchor="middle" >10</text>
<line x1="5.2" y1="340.9" x2="27.8" y2="340.9" stroke="#8c8c8c" stroke-width="1.4" />
<text x="16.6" y="369.7" font-size="11.2" fill="#f3f3f3" text-anchor="middle" >11</text>
<line x1="5.2" y1="356.9" x2="27.8" y2="356.9" stroke="#8c8c8c" stroke-width="1.4" />
<text x="16.6" y="385.8" font-size="11.2" fill="#f3f3f3" text-anchor="middle" >12</text>
<line x1="5.2" y1="373.0" x2="27.8" y2="373.0" stroke="#8c8c8c" stroke-width="1.4" />
<text x="16.6" y="401.8" font-size="11.2" fill="#f3f3f3" text-anchor="middle" >13</text>
<line x1="5.2" y1="389.0" x2="27.8" y2="389.0" stroke="#8c8c8c" stroke-width="1.4" />
<text x="16.6" y="417.9" font-size="11.2" fill="#f3f3f3" text-anchor="middle" >14</text>
<line x1="5.2" y1="405.1" x2="27.8" y2="405.1" stroke="#8c8c8c" stroke-width="1.4" />
<line x1="81.2" y1="196.6" x2="81.2" y2="415.4" stroke="#eaeaea" stroke-width="1" />
<line x1="134.7" y1="196.6" x2="134.7" y2="415.4" stroke="#eaeaea" stroke-width="1" />
<line x1="188.2" y1="196.6" x2="188.2" y2="415.4" stroke="#eaeaea" stroke-width="1" />
<line x1="241.6" y1="196.6" x2="241.6" y2="415.4" stroke="#eaeaea" stroke-width="1" />
<line x1="295.1" y1="196.6" x2="295.1" y2="415.4" stroke="#eaeaea" stroke-width="1" />
<line x1="348.5" y1="196.6" x2="348.5" y2="415.4" stroke="#eaeaea" stroke-width="1" />
<line x1="402.0" y1="196.6" x2="402.0" y2="415.4" stroke="#eaeaea" stroke-width="1" />
<line x1="455.4" y1="196.6" x2="455.4" y2="415.4" stroke="#eaeaea" stroke-width="1" />
<line x1="508.9" y1="196.6" x2="508.9" y2="415.4" stroke="#eaeaea" stroke-width="1" />
<line x1="562.3" y1="196.6" x2="562.3" y2="415.4" stroke="#eaeaea" stroke-width="1" />
<line x1="615.8" y1="196.6" x2="615.8" y2="415.4" stroke="#eaeaea" stroke-width="1" />
<line x1="669.2" y1="196.6" x2="669.2" y2="415.4" stroke="#eaeaea" stroke-width="1" />
<line x1="27.8" y1="212.5" x2="698" y2="212.5" stroke="#eaeaea" stroke-width="1" />
<line x1="27.8" y1="228.5" x2="698" y2="228.5" stroke="#eaeaea" stroke-width="1" />
<line x1="27.8" y1="244.6" x2="698" y2="244.6" stroke="#eaeaea" stroke-width="1" />
<line x1="27.8" y1="260.6" x2="698" y2="260.6" stroke="#eaeaea" stroke-width="1" />
<line x1="27.8" y1="276.6" x2="698" y2="276.6" stroke="#eaeaea" stroke-width="1" />
<line x1="27.8" y1="292.7" x2="698" y2="292.7" stroke="#eaeaea" stroke-width="1" />
<line x1="27.8" y1="308.8" x2="698" y2="308.8" stroke="#eaeaea" stroke-width="1" />
<line x1="27.8" y1="324.8" x2="698" y2="324.8" stroke="#eaeaea" stroke-width="1" />
<line x1="27.8" y1="340.9" x2="698" y2="340.9" stroke="#eaeaea" stroke-width="1" />
<line x1="27.8" y1="356.9" x2="698" y2="356.9" stroke="#eaeaea" stroke-width="1" />
<line x1="27.8" y1="373.0" x2="698" y2="373.0" stroke="#eaeaea" stroke-width="1" />
<line x1="27.8" y1="389.0" x2="698" y2="389.0" stroke="#eaeaea" stroke-width="1" />
<line x1="27.8" y1="405.1" x2="698" y2="405.1" stroke="#eaeaea" stroke-width="1" />
<rect x="188.4" y="231.4" width="203" height="46" fill="#f0f0f0" stroke="#8a8a8a" stroke-width="0.8" />
<line x1="188.4" y1="276.6" x2="391.4" y2="276.6" stroke="#696969" stroke-width="1.6" />
<line x1="390.6" y1="231.4" x2="390.6" y2="277.4" stroke="#696969" stroke-width="1.6" />
<clipPath id="btnclip"><rect x="190" y="233" width="199.600" height="43"/></clipPath>
<g clip-path="url(#btnclip)">
<text x="282" y="258" font-size="11.5" fill="#111" stroke="#111" stroke-width="0.15" textLength="103" lengthAdjust="spacingAndGlyphs" >document.com/index.</text>
</g>
<circle cx="188.4" cy="231.4" r="3.800" fill="#fff" stroke="#555" stroke-width="1.300"/>
<circle cx="188.4" cy="254.6" r="3.800" fill="#fff" stroke="#555" stroke-width="1.300"/>
<circle cx="188.4" cy="277.4" r="3.800" fill="#fff" stroke="#555" stroke-width="1.300"/>
<circle cx="391.4" cy="231.4" r="3.800" fill="#fff" stroke="#555" stroke-width="1.300"/>
<circle cx="391.4" cy="254.6" r="3.800" fill="#fff" stroke="#555" stroke-width="1.300"/>
<circle cx="391.4" cy="277.4" r="3.800" fill="#fff" stroke="#555" stroke-width="1.300"/>
<rect x="698" y="181.4" width="17" height="234" fill="#2c2c2c" />
<rect x="701.6" y="182" width="10" height="234" fill="#454545" rx="5" />
<path d="M703.200 190.400 l3.500 -5 l3.500 5 z" fill="#c8c8c8"/>
<rect x="703.4" y="195" width="6.6" height="95" fill="#c2c2c2" rx="3.3" />
<path d="M703.200 408.400 l3.500 5 l3.500 -5 z" fill="#c8c8c8"/>
<rect x="5.2" y="415.8" width="709.8" height="27" fill="#2c2c2c" />
<path d="M156.600 412 h48 v24 q0 3 -3 3 h-42 q-3 0 -3 -3 z" fill="#fff"/>
<path d="M152.600 415.400 h4 v4 q0 -4 -4 -4 z" fill="#fff"/>
<path d="M208.600 415.400 h-4 v4 q0 -4 4 -4 z" fill="#fff"/>
<path d="M31.200 424.200 l-4.400 4.200 l4.400 4.200" stroke="#8e8e8e" stroke-width="1.200" fill="none"/>
<path d="M54.400 424.200 l4.400 4.200 l-4.400 4.200" stroke="#8e8e8e" stroke-width="1.200" fill="none"/>
<text x="107" y="433.4" font-size="11.8" fill="#f3f3f3" stroke="#f3f3f3" stroke-width="0.3" textLength="35" lengthAdjust="spacingAndGlyphs" >Sheet2</text>
<line x1="152.6" y1="422" x2="152.6" y2="436" stroke="#6a6a6a" stroke-width="1" />
<text x="163.6" y="430.6" font-size="11.9" fill="#262626" stroke="#262626" stroke-width="0.45" textLength="34.2" lengthAdjust="spacingAndGlyphs" >Sheet1</text>
<rect x="163.6" y="435.4" width="34.2" height="1.3" fill="#1c8245" />
<line x1="208" y1="422" x2="208" y2="436" stroke="#6a6a6a" stroke-width="1" />
<path d="M248.300 424 v8.600 M244 428.400 h8.600" stroke="#b0b0b0" stroke-width="1.200"/>
<circle cx="434.400" cy="426.2" r="0.9" fill="#e0e0e0"/>
<circle cx="434.400" cy="429.4" r="0.9" fill="#e0e0e0"/>
<circle cx="434.400" cy="432.6" r="0.9" fill="#e0e0e0"/>
<rect x="448" y="422" width="251" height="13.4" fill="#404040" rx="6.7" />
<path d="M457 425 v7 l-5.400 -3.500 z" fill="#c8c8c8"/>
<rect x="461.6" y="425" width="204.4" height="7" fill="#c2c2c2" rx="3.5" />
<path d="M690.200 425 v7 l5.400 -3.500 z" fill="#c8c8c8"/>
<rect x="0" y="442.2" width="715" height="17.4" fill="#393939" />
<rect x="0" y="459.4" width="715" height="3.6" fill="#cdcdcd" />
<text x="6.6" y="455" font-size="9.4" fill="#f3f3f3" stroke="#f3f3f3" stroke-width="0.2" textLength="24.4" lengthAdjust="spacingAndGlyphs" >Ready</text>
<text x="44.4" y="455" font-size="9.4" fill="#f3f3f3" stroke="#f3f3f3" stroke-width="0.2" textLength="47" lengthAdjust="spacingAndGlyphs" >Sheet 2 of 2</text>
<text x="104" y="455" font-size="9.4" fill="#f3f3f3" stroke="#f3f3f3" stroke-width="0.2" textLength="76" lengthAdjust="spacingAndGlyphs" >Workbook Statistics</text>
<g fill="none" stroke="#e0e0e0" stroke-linejoin="round"><path d="M201.600 456.600 h-4 v-10 h11.400 v3.600" stroke-width="1.100"/><path d="M197.600 448 h11.400" stroke-width="2"/><path d="M199.600 451.600 h1.200 M199.600 454 h1.200" stroke-width="1"/><circle cx="205.800" cy="453.800" r="3.400" stroke-width="1"/><circle cx="205.800" cy="453.800" r="1.500" fill="#e0e0e0" stroke="none"/></g>
<g fill="none" stroke="#e0e0e0" stroke-width="1.200" stroke-linecap="round" stroke-linejoin="round"><circle cx="229.200" cy="447.800" r="1.700"/><path d="M224.400 450 q-0.600 1.200 0.800 1.600 l2.600 0.800 v1.800 l-2.400 3.400 q0.400 1.200 1.600 0.400 l2.200 -3 l1 1.200 M234 450 q0.600 1.200 -0.800 1.600 l-2.600 0.800 v1.400 M224.600 450 q2.200 0.800 4.600 0.800 t4.600 -0.800"/><path d="M231.200 454 l3.600 3.600 M234.800 454 l-3.600 3.600" stroke-width="1.100"/></g>
<text x="239" y="455" font-size="9.4" fill="#f3f3f3" stroke="#f3f3f3" stroke-width="0.2" textLength="91.4" lengthAdjust="spacingAndGlyphs" >Accessibility: Investigate</text>
<rect x="492" y="442" width="33" height="18.4" fill="#4a4a4a" />
<g fill="none" stroke="#f0f0f0"><rect x="503.200" y="446.600" width="10.400" height="10" stroke-width="1.200"/><path d="M506.600 446.600 v10 M510.200 446.600 v10 M503.200 450 h10.400 M503.200 453.400 h10.400" stroke-width="1.100"/></g>
<g fill="none" stroke="#f0f0f0"><rect x="536.600" y="446.600" width="11" height="10" stroke-width="1.200"/><rect x="539.800" y="449" width="4.600" height="7.200" stroke-width="1"/><path d="M541.400 451 v3.600 M543 451 v3.600" stroke-width="0.700"/></g>
<g fill="none" stroke="#f0f0f0"><rect x="569.600" y="446.600" width="11.400" height="10" stroke-width="1.200"/><path d="M573.200 446.600 v5.600 h7.800 M576.800 446.600 v5.600" stroke-width="1.100"/></g>
<line x1="597" y1="451.6" x2="603" y2="451.6" stroke="#d0d0d0" stroke-width="1.1" />
<line x1="607.6" y1="451.6" x2="691" y2="451.6" stroke="#9a9a9a" stroke-width="1" />
<rect x="647.6" y="447" width="4" height="9.4" fill="#d6d6d6" />
<line x1="649.6" y1="448" x2="649.6" y2="455.4" stroke="#8a8a8a" stroke-width="0.8" />
<path d="M695 451.600 h6.400 M698.200 448.400 v6.400" stroke="#d0d0d0" stroke-width="1.100"/>
<rect x="0" y="1" width="1" height="180" fill="#4a4a4a" />
<rect x="0" y="442" width="1" height="18.4" fill="#4a4a4a" />
<filter id="msh" x="-10%" y="-5%" width="120%" height="110%"><feGaussianBlur stdDeviation="1.6"/></filter>
<rect x="193" y="156" width="128.500" height="273.500" fill="#000" opacity="0.3" filter="url(#msh)"/>
<rect x="194.4" y="155.4" width="125.7" height="272.1" fill="#4d4d4d" stroke="#707070" stroke-width="1" />
<text x="225.6" y="172" font-size="10.8" fill="#f3f3f3" stroke="#f3f3f3" stroke-width="0.3" textLength="29.4" lengthAdjust="spacingAndGlyphs" >Insert...</text>
<text x="225.6" y="196" font-size="10.8" fill="#f3f3f3" stroke="#f3f3f3" stroke-width="0.3" textLength="28.8" lengthAdjust="spacingAndGlyphs" >Delete</text>
<text x="225.6" y="220" font-size="10.8" fill="#f3f3f3" stroke="#f3f3f3" stroke-width="0.3" textLength="35.4" lengthAdjust="spacingAndGlyphs" >Rename</text>
<text x="225.6" y="244.4" font-size="10.8" fill="#f3f3f3" stroke="#f3f3f3" stroke-width="0.3" textLength="67.4" lengthAdjust="spacingAndGlyphs" >Move or Copy...</text>
<rect x="194" y="250.6" width="126" height="26.4" fill="#636363" />
<rect x="194.100" y="250.600" width="124.700" height="26.300" fill="none" stroke="#ed1c24" stroke-width="3.200"/>
<text x="225.6" y="268" font-size="10.8" fill="#f3f3f3" stroke="#f3f3f3" stroke-width="0.3" textLength="46.8" lengthAdjust="spacingAndGlyphs" >View Code</text>
<text x="225.6" y="292" font-size="10.8" fill="#f3f3f3" stroke="#f3f3f3" stroke-width="0.3" textLength="64.4" lengthAdjust="spacingAndGlyphs" >Protect Sheet...</text>
<text x="225.6" y="316" font-size="10.8" fill="#f3f3f3" stroke="#f3f3f3" stroke-width="0.3" textLength="42.8" lengthAdjust="spacingAndGlyphs" >Tab Color</text>
<path d="M307.800 308.200 l3.800 3.600 l-3.800 3.600" stroke="#e6e6e6" stroke-width="1.100" fill="none"/>
<line x1="222" y1="325.4" x2="320" y2="325.4" stroke="#717171" stroke-width="1" />
<text x="225.6" y="342" font-size="10.8" fill="#f3f3f3" stroke="#f3f3f3" stroke-width="0.3" textLength="20.4" lengthAdjust="spacingAndGlyphs" >Hide</text>
<text x="225.6" y="366" font-size="10.8" fill="#8e8e8e" stroke="#8e8e8e" stroke-width="0.3" textLength="36.4" lengthAdjust="spacingAndGlyphs" >Unhide...</text>
<line x1="222" y1="375.4" x2="320" y2="375.4" stroke="#717171" stroke-width="1" />
<text x="225.6" y="392" font-size="10.8" fill="#f3f3f3" stroke="#f3f3f3" stroke-width="0.3" textLength="72.4" lengthAdjust="spacingAndGlyphs" >Select All Sheets</text>
<line x1="222" y1="402" x2="320" y2="402" stroke="#717171" stroke-width="1" />
<text x="225.6" y="418.4" font-size="10.8" fill="#f3f3f3" stroke="#f3f3f3" stroke-width="0.3" textLength="74.4" lengthAdjust="spacingAndGlyphs" >Link to this Sheet</text>
<line x1="225.6" y1="172.9" x2="228.4" y2="172.9" stroke="#f3f3f3" stroke-width="1.1" />
<line x1="225.6" y1="196.9" x2="232.6" y2="196.9" stroke="#f3f3f3" stroke-width="1.1" />
<line x1="225.6" y1="220.9" x2="232.6" y2="220.9" stroke="#f3f3f3" stroke-width="1.1" />
<line x1="225.6" y1="245.3" x2="234.2" y2="245.3" stroke="#f3f3f3" stroke-width="1.1" />
<line x1="225.6" y1="268.90000000000003" x2="232.2" y2="268.90000000000003" stroke="#f3f3f3" stroke-width="1.1" />
<line x1="225.6" y1="292.90000000000003" x2="232.0" y2="292.90000000000003" stroke="#f3f3f3" stroke-width="1.1" />
<line x1="225.6" y1="316.90000000000003" x2="231.2" y2="316.90000000000003" stroke="#f3f3f3" stroke-width="1.1" />
<line x1="225.6" y1="342.90000000000003" x2="232.6" y2="342.90000000000003" stroke="#f3f3f3" stroke-width="1.1" />
<line x1="225.6" y1="366.90000000000003" x2="232.6" y2="366.90000000000003" stroke="#8e8e8e" stroke-width="1.1" />
<line x1="225.6" y1="392.90000000000003" x2="232.2" y2="392.90000000000003" stroke="#f3f3f3" stroke-width="1.1" />
<line x1="225.6" y1="419.3" x2="230.79999999999998" y2="419.3" stroke="#f3f3f3" stroke-width="1.1" />
<g fill="none" stroke="#c8c8c8" stroke-linejoin="round"><path d="M212 196.600 h-7.200 v-11 h12.600 v6" stroke-width="1.100"/><path d="M204.800 188.400 h12.600 M204.800 191.200 h12.600 M204.800 194 h6.400 M208.800 185.600 v11 M213 185.600 v6.400" stroke-width="0.900"/></g><path d="M212.400 192.400 l5.200 5 M217.600 192.400 l-5.200 5" stroke="#e4484d" stroke-width="1.300" fill="none"/>
<rect x="204.8" y="185.6" width="12.6" height="2.4" fill="#c8c8c8" opacity="0.55"/>
<rect x="206" y="209.4" width="11" height="2.4" fill="#c8c8c8" opacity="0.55"/>
<g fill="none" stroke="#c8c8c8" stroke-linejoin="round"><path d="M210 220.400 h-4 v-11 h11 v3" stroke-width="1.100"/><path d="M206 212.200 h11 M206 215 h6 M206 217.800 h4 M209.600 209.400 v8 M213.400 209.400 v4" stroke-width="0.900"/></g><path d="M210.600 220.600 l1 -2.800 l5 -5 l1.800 1.800 l-5 5 z" fill="#2f9bf0"/>
<g fill="none" stroke="#c8c8c8" stroke-linejoin="round"><path d="M209.600 268.600 h-5 v-12 h13 v3.600" stroke-width="1.100"/><path d="M204.600 258.200 h13" stroke-width="1.800"/><path d="M206.600 261.800 h1.200 M206.600 264 h1.200 M206.600 266.200 h1.200" stroke-width="0.900"/></g><circle cx="212.800" cy="263.800" r="2.600" fill="none" stroke="#2f9bf0" stroke-width="1.200"/><path d="M214.800 266 l3 3.200" stroke="#2f9bf0" stroke-width="1.300" stroke-linecap="round"/>
<g fill="none" stroke="#c8c8c8" stroke-linejoin="round"><path d="M210.600 293 h-5.800 v-11.200 h12.600 v4.400" stroke-width="1.100"/><path d="M204.800 284.600 h12.600 M204.800 287.400 h7 M204.800 290.200 h6 M208.800 281.800 v11.200 M213 281.800 v4" stroke-width="0.900"/></g><rect x="212.300" y="289.500" width="5.900" height="4.300" rx="0.600" fill="#eeb03c"/><rect x="214.900" y="290.800" width="0.800" height="1.600" fill="#6a4a10"/><path d="M213.700 289.400 v-1.300 a1.550 1.550 0 0 1 3.100 0 v1.300" fill="none" stroke="#eeb03c" stroke-width="1"/>
<g fill="none" stroke="#c8c8c8" stroke-linejoin="round"><path d="M210 418.600 h-4 v-9.600 h11 v4" stroke-width="1.100"/><path d="M206 411.800 h11 M206 414.600 h5 M209.600 409 v7 M213.400 409 v4" stroke-width="0.900"/></g><g fill="none" stroke="#2f9bf0" stroke-width="1.100"><rect x="210.800" y="414.800" width="3.800" height="2.600" rx="1.300"/><rect x="213" y="416" width="3.800" height="2.600" rx="1.300"/></g>
</svg>
</body></html>
